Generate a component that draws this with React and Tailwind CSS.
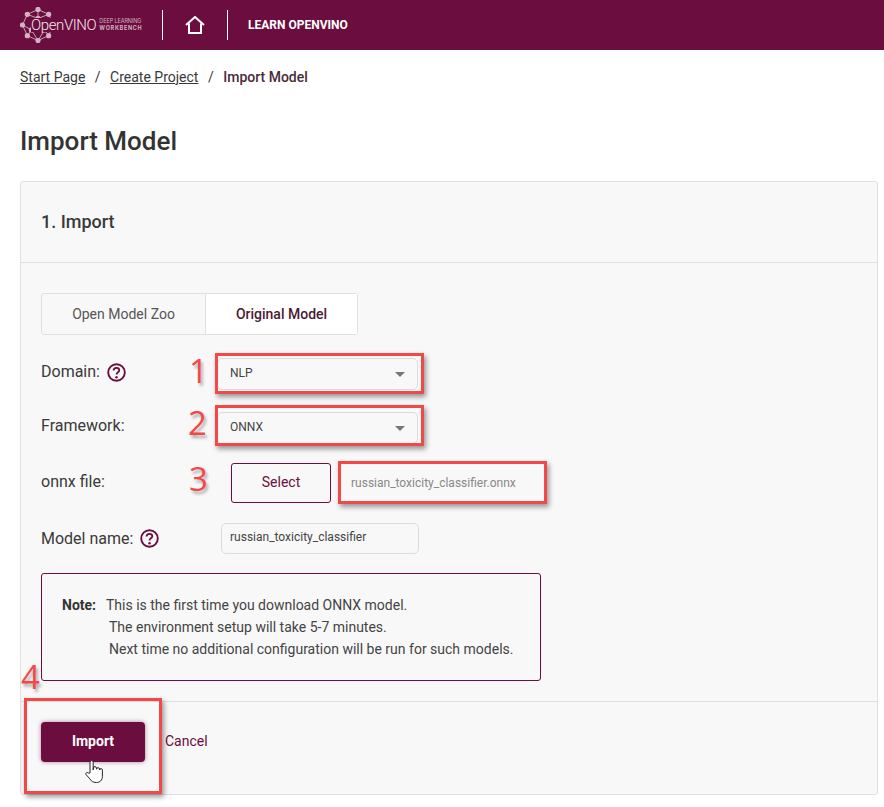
const ROBOTO = "font-['Roboto',sans-serif]";

function Help() {
  return (
    <svg width="19" height="19" viewBox="0 0 19 19" fill="none" className="shrink-0">
      <circle cx="9.5" cy="9.5" r="8.3" stroke="#6b0d3e" strokeWidth="1.9" />
      <path d="M6.6 7.500c0-1.700 1.300-2.700 2.900-2.700s2.800 1 2.800 2.500c0 2.100-2.800 2-2.800 4.200" stroke="#6b0d3e" strokeWidth="1.800" />
      <circle cx="9.5" cy="14.200" r="1.200" fill="#6b0d3e" />
    </svg>
  );
}

function Logo() {
  const nodes = [[22, 3], [35, 9], [41, 22], [35, 35], [22, 41], [9, 35], [3, 22], [9, 9], [22, 14], [30, 28], [14, 28]];
  const lines = [[0, 1], [1, 2], [2, 3], [3, 4], [4, 5], [5, 6], [6, 7], [7, 0], [0, 8], [8, 1], [8, 7], [8, 9], [8, 10], [9, 10], [9, 3], [10, 5], [9, 4], [10, 4], [9, 2], [10, 6]];
  return (
    <div className="flex items-center relative h-[36px] w-[123px]">
      <svg width="36" height="36" viewBox="0 0 44 44" className="absolute left-0 top-0">
        {lines.map(([a, b], i) => (
          <line key={i} x1={nodes[a][0]} y1={nodes[a][1]} x2={nodes[b][0]} y2={nodes[b][1]} stroke="#c9a3b6" strokeWidth="1.2" />
        ))}
        {nodes.map(([x, y], i) => (
          <circle key={i} cx={x} cy={y} r="3.200" fill="#d3b2c3" />
        ))}
      </svg>
      <span className="relative ml-[11px] pr-[1px] bg-[#6b0d3e] text-[15px] leading-[14px] tracking-[-0.4px] text-[#f3e9ee] font-light">OpenVINO</span>
      <span className="relative ml-[2px] flex flex-col text-[5.5px] leading-[7px] text-[#d3b2c3] whitespace-nowrap font-['Inter',sans-serif]">
        <span className="tracking-[-0.1px]">DEEP LEARNING</span>
        <span className="font-bold tracking-[0.7px]">WORKBENCH</span>
      </span>
    </div>
  );
}

function Field({ label, help, children, className, labelClass = "mt-[-4px]", helpClass = "mt-[-3px]" }) {
  return (
    <div className={`flex items-center ${className}`}>
      <div className="w-[180px] flex items-center gap-[7px] text-[16px] text-[#3a3a3a]">
        <span className={labelClass}>{label}</span>
        {help && <span className={helpClass}><Help /></span>}
      </div>
      {children}
    </div>
  );
}

function Select({ value }) {
  return (
    <div className="ml-[-4px] w-[201px] h-[32px] rounded-[5px] border border-[#dcdcdc] bg-[#f8f8f8] flex items-center justify-between pl-[12px] pr-[12px] text-[12px] text-[#444]">
      <span className="mt-[-2px]">{value}</span>
      <span className="w-0 h-0 border-x-[5px] border-x-transparent border-t-[5px] border-t-[#777]" />
    </div>
  );
}

// red annotation frames and numbers drawn on top of the screenshot
function Frame({ className }) {
  return <div className={`absolute border-[3px] border-[#f44848] shadow-[2px_3px_5px_rgba(0,0,0,0.4)] ${className}`} />;
}

function Num({ children, className }) {
  return (
    <span className={`absolute text-[33px] leading-none font-medium text-[#f44848] [text-shadow:2px_3px_3px_rgba(0,0,0,0.3)] font-['Open_Sans',sans-serif] ${className}`}>
      {children}
    </span>
  );
}

export default function App() {
  return (
    <div className={`relative w-[884px] h-[807px] overflow-hidden bg-white ${ROBOTO}`}>
      <header className="h-[50px] bg-[#6b0d3e] flex items-center pl-[20px]">
        <Logo />
        <div className="ml-[19px] w-px h-[30px] bg-white" />
        <svg width="20" height="18" viewBox="0 0 20 18" fill="none" className="ml-[22px]">
          <path d="M1 9 10 1l9 8M4 7.5V17h12V7.5" stroke="#fff" strokeWidth="2" />
        </svg>
        <div className="ml-[22px] w-px h-[30px] bg-white" />
        <span className="ml-[20px] text-[12px] font-bold text-white">LEARN OPENVINO</span>
      </header>

      <nav className="h-[54px] pl-[20px] flex items-center text-[14px] text-[#3a3a3a]">
        <span className="underline">Start Page</span>
        <span className="mx-[9.5px]">/</span>
        <span className="underline">Create Project</span>
        <span className="mx-[9.5px]">/</span>
        <span className="font-medium text-[#4a2a3a]">Import Model</span>
      </nav>

      <h1 className="mt-[17px] ml-[20px] h-[40px] leading-[40px] text-[26px] font-medium text-[#333]">Import Model</h1>

      <section className="mt-[20px] ml-[20px] w-[858px] h-[614px] rounded-[3px] border border-[#e0e0e0] bg-[#f8f8f8] flex flex-col">
        <div className="h-[81px] border-b border-[#e0e0e0] pl-[20px] pb-[2px] flex items-center text-[18px] font-medium text-[#3a3a3a]">1. Import</div>

        <div className="flex-1 pl-[20px] pt-[30px]">
          <div className="w-[317px] h-[42px] flex rounded-[3px] border border-[#e0e0e0] text-[14px]">
            <div className="w-[164px] border-r border-[#e0e0e0] flex items-center justify-center text-[#555]">Open Model Zoo</div>
            <div className="flex-1 bg-white flex items-center justify-center font-medium text-[#4a1a35]">Original Model</div>
          </div>

          <Field label="Domain:" help className="mt-[23px] h-[32px]"><Select value="NLP" /></Field>
          <Field label="Framework:" className="mt-[22px] h-[32px]"><Select value="ONNX" /></Field>
          <Field label="onnx file:" labelClass="mt-[-2px]" className="mt-[19px] h-[40px]">
            <div className="ml-[10px] w-[100px] h-[40px] rounded-[3px] border border-[#6b0d3e] flex items-center justify-center text-[14px] text-[#6b0d3e]">
              <span className="mt-[-2px]">Select</span>
            </div>
            <span className="ml-[20px] text-[12px] text-[#888]">russian_toxicity_classifier.onnx</span>
          </Field>
          <Field label="Model name:" help labelClass="mt-0" helpClass="mt-0" className="mt-[20px] h-[31px]">
            <div className="w-[198px] h-[31px] rounded-[5px] border border-[#dcdcdc] flex items-center pl-[8px] pb-[3px] text-[12px] text-[#444]">russian_toxicity_classifier</div>
          </Field>

          <div className="mt-[19px] w-[500px] h-[108px] rounded-[3px] border border-[#6b0d3e] pl-[20px] pb-[1px] flex items-center text-[14px] text-[#444] leading-[22px]">
            <div className="flex">
              <span className="w-[44px] font-bold text-[#333]">Note:</span>
              <div>
                <div>This is the first time you download ONNX model.</div>
                <div className="ml-[3px]">The environment setup will take 5-7 minutes.</div>
                <div className="ml-[3px]">Next time no additional configuration will be run for such models.</div>
              </div>
            </div>
          </div>
        </div>

        <div className="h-[93px] border-t border-[#e0e0e0] pl-[20px] pt-[20px] flex items-start">
          <div className="w-[104px] h-[40px] rounded-[4px] bg-[#6b0d3e] shadow-[0_0_4px_rgba(107,13,62,0.5)] flex items-center justify-center text-[14px] font-bold text-white">
            <span className="mt-[-2px]">Import</span>
          </div>
          <span className="ml-[20px] mt-[9px] text-[14px] text-[#6b0d3e]">Cancel</span>
        </div>
      </section>

      <Frame className="left-[215px] top-[353px] w-[209px] h-[41px]" />
      <Frame className="left-[215px] top-[405px] w-[209px] h-[41px]" />
      <Frame className="left-[338px] top-[461px] w-[209px] h-[43px]" />
      <Frame className="left-[24px] top-[698px] w-[138px] h-[96px]" />
      <Num className="left-[189px] top-[354px]">1</Num>
      <Num className="left-[188px] top-[406px]">2</Num>
      <Num className="left-[189px] top-[462px]">3</Num>
      <Num className="left-[21px] top-[660px]">4</Num>

      <svg width="22" height="26" viewBox="0 0 22 26" className="absolute left-[84px] top-[759px]">
        <path d="M6 14V3.200a1.600 1.600 0 0 1 3.200 0V11l.2-2a1.500 1.500 0 0 1 3 .2l.1 1a1.500 1.500 0 0 1 3 0l.1.8a1.400 1.400 0 0 1 2.800.2v6c0 4-2.400 6.300-6 6.300-3.400 0-4.800-1-6.500-3.600L2 15.500c-.8-1.400 1.300-2.800 2.500-1.400Z" fill="#fff" stroke="#222" strokeWidth="1" />
      </svg>
    </div>
  );
}
